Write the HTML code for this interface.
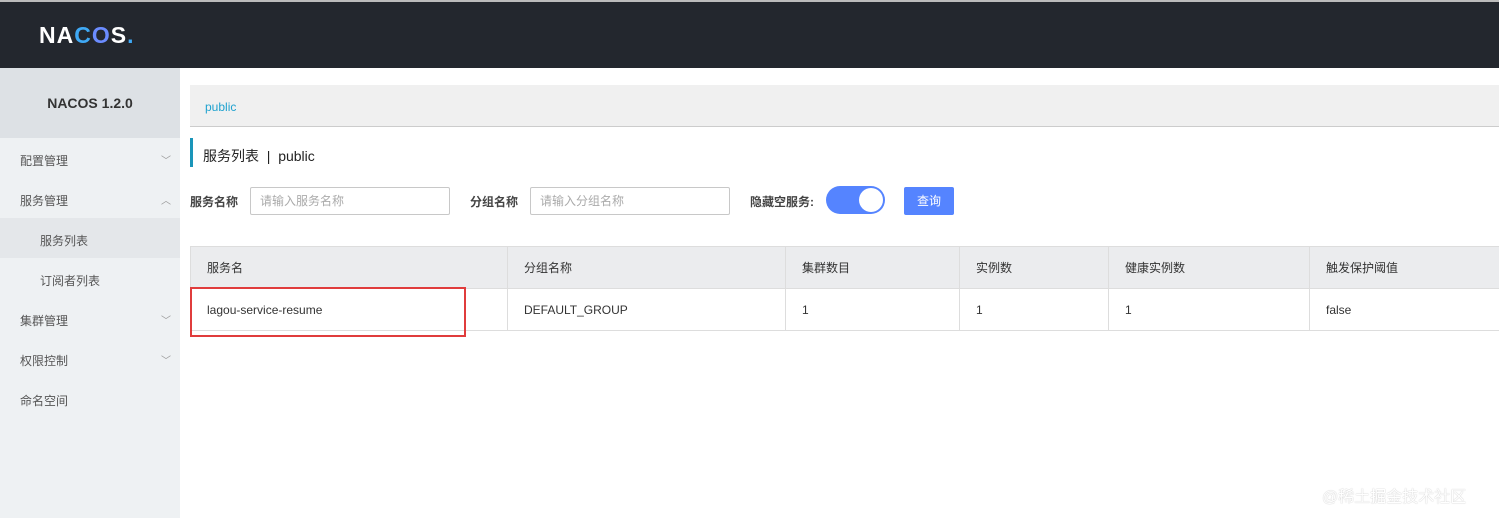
<!DOCTYPE html>
<html><head><meta charset="utf-8"><style>
*{margin:0;padding:0;box-sizing:border-box}
body{width:1499px;height:518px;overflow:hidden;background:#fff;font-family:"Liberation Sans","Noto Sans CJK SC",sans-serif;font-size:12px;color:#333;position:relative}
.hd{position:absolute;left:0;top:0;width:1499px;height:68px;background:#23272e;border-top:2px solid #bbb}
.logo{position:absolute;left:39px;top:20px;font-size:23px;font-weight:bold;color:#fff;letter-spacing:1px}
.sb{position:absolute;left:0;top:68px;width:180px;height:450px;background:#eef1f3}
.ver{height:70px;background:#dde1e5;text-align:center;line-height:70px;font-weight:bold;font-size:14px;color:#333}
.mi{position:absolute;left:20px;font-size:12px;color:#555}
.ar{position:absolute;left:161px;font-size:10px;color:#999}
.sel{position:absolute;left:0;top:150px;width:180px;height:40px;background:#e4e7ea}
.bc{position:absolute;left:190px;top:85px;width:1309px;height:42px;background:#f0f0f0;border-bottom:1px solid #ccc;color:#1fa2cf;padding-left:15px;line-height:44px}
.tt{position:absolute;left:190px;top:138px;height:29px;border-left:3px solid #1a95b9;padding-left:10px;line-height:36px;font-size:14px;color:#222}
.lb{position:absolute;top:193px;font-weight:bold;color:#444}
.in{position:absolute;top:187px;width:200px;height:28px;border:1px solid #c8c8c8;border-radius:2px;color:#aaa;padding-left:9px;line-height:27px}
.tg{position:absolute;left:826px;top:186px;width:59px;height:28px;border-radius:14px;background:#5584ff}
.tg i{position:absolute;right:2px;top:2px;width:24px;height:24px;border-radius:50%;background:#fff}
.bt{position:absolute;left:904px;top:187px;width:50px;height:28px;background:#5584ff;color:#fff;text-align:center;line-height:28px;border-radius:2px}
table{position:absolute;left:190px;top:246px;width:1320px;border-collapse:collapse}
td{border:1px solid #ddd;height:42px;padding-left:16px;color:#333}
tr.h td{background:#ebecee}
.rb{position:absolute;left:190px;top:287px;width:276px;height:50px;border:2px solid #e03c3c}
.wm{position:absolute;left:1322px;top:483px;font-size:16px;color:#fff;text-shadow:0 0 1px #aaa}
</style></head><body>
<div class="hd"><div class="logo">NA<span style="color:#3fa9f5">C</span><span style="color:#6b8cff">O</span>S<span style="color:#3fa9f5">.</span></div></div>
<div class="sb"><div class="ver">NACOS 1.2.0</div>
<div class="sel"></div>
<div class="mi" style="top:84px">配置管理</div><div class="ar" style="top:84px">﹀</div>
<div class="mi" style="top:124px">服务管理</div><div class="ar" style="top:124px">︿</div>
<div class="mi" style="top:164px;left:40px">服务列表</div>
<div class="mi" style="top:204px;left:40px">订阅者列表</div>
<div class="mi" style="top:244px">集群管理</div><div class="ar" style="top:244px">﹀</div>
<div class="mi" style="top:284px">权限控制</div><div class="ar" style="top:284px">﹀</div>
<div class="mi" style="top:324px">命名空间</div>
</div>
<div class="bc">public</div>
<div class="tt">服务列表 &nbsp;|&nbsp; public</div>
<div class="lb" style="left:190px">服务名称</div><div class="in" style="left:250px">请输入服务名称</div>
<div class="lb" style="left:470px">分组名称</div><div class="in" style="left:530px">请输入分组名称</div>
<div class="lb" style="left:750px">隐藏空服务:</div>
<div class="tg"><i></i></div>
<div class="bt">查询</div>
<table>
<tr class="h"><td style="width:317px">服务名</td><td style="width:278px">分组名称</td><td style="width:174px">集群数目</td><td style="width:149px">实例数</td><td style="width:201px">健康实例数</td><td>触发保护阈值</td></tr>
<tr><td>lagou-service-resume</td><td>DEFAULT_GROUP</td><td>1</td><td>1</td><td>1</td><td>false</td></tr>
</table>
<div class="rb"></div>
<div class="wm">@稀土掘金技术社区</div>
</body></html>
